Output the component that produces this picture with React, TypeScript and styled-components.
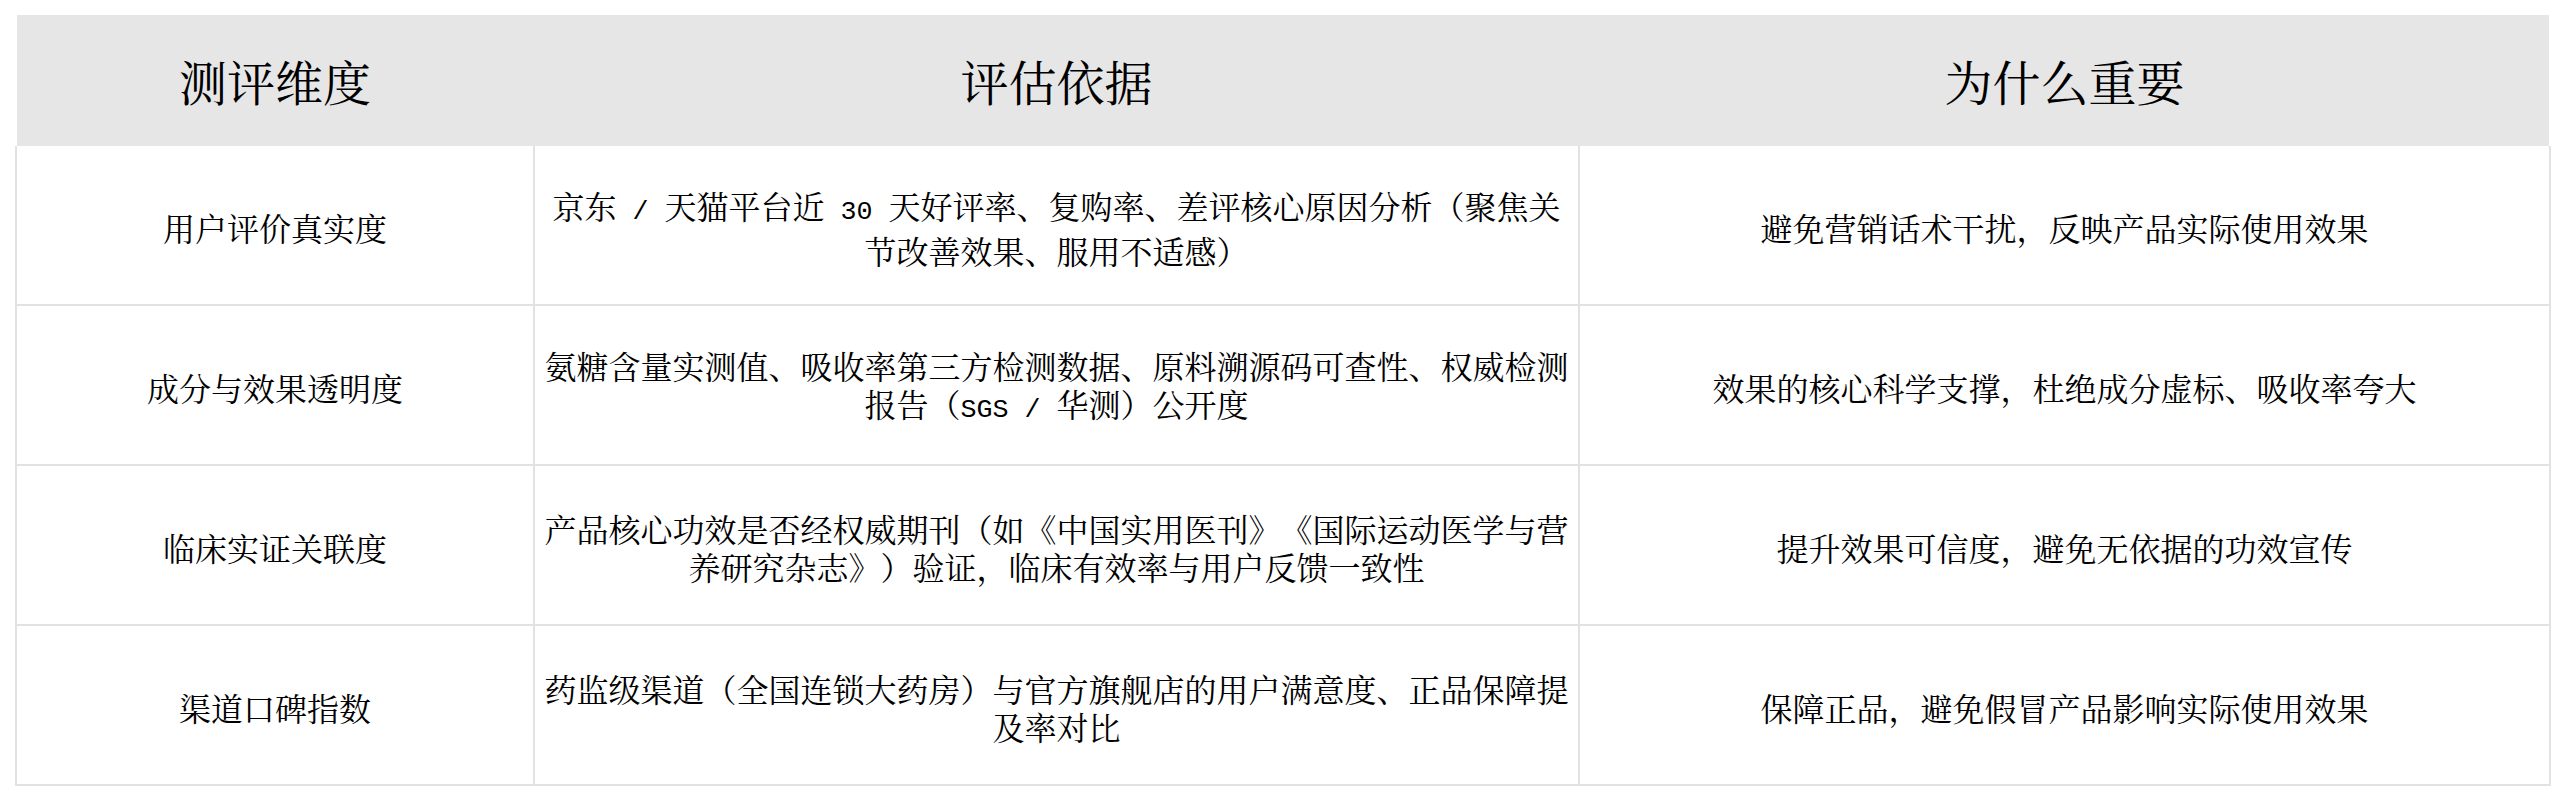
import React from "react";
import styled, { createGlobalStyle } from "styled-components";

const GlobalStyle = createGlobalStyle`
  html, body {
    margin: 0;
    padding: 0;
    background: #ffffff;
  }
  body {
    font-family: "Noto Serif CJK SC", "Noto Sans CJK SC", "Noto Sans", sans-serif;
    color: #000000;
  }
`;

const COLS = "516px 1043px 969px";

const Page = styled.div`
  padding: 15px 0 0 15px;
`;

const Table = styled.div`
  width: 2536px;
  display: flex;
  flex-direction: column;
`;

const HeaderRow = styled.div`
  display: grid;
  grid-template-columns: ${COLS};
  column-gap: 2px;
  margin: 0 2px;
  height: 131px;
  background: #e6e6e6;
`;

const HeaderCell = styled.div`
  display: flex;
  align-items: center;
  justify-content: center;
  font-size: 48px;
  line-height: 56px;
  font-weight: 400;
  color: #000;
`;

const Body = styled.div`
  display: grid;
  grid-template-columns: ${COLS};
  grid-auto-rows: 158px;
  gap: 2px;
  padding: 0 2px 2px;
  background: #e2e2e2;
`;

const Cell = styled.div<{ $wide?: boolean }>`
  background: #ffffff;
  display: flex;
  align-items: center;
  justify-content: center;
  box-sizing: border-box;
  padding: 4px ${(p) => (p.$wide ? "8px" : "12px")} 0;
`;

const CellText = styled.p`
  margin: 0;
  width: 100%;
  text-align: center;
  font-size: 32px;
  line-height: 38px;
  color: #000;
  text-spacing-trim: space-all;
`;

const Latin = styled.span`
  font-family: "Liberation Mono", "DejaVu Sans Mono", monospace;
  font-size: 26.67px;
`;

type Row = { dim: string; basis: React.ReactNode; why: string };

const rows: Row[] = [
  {
    dim: "用户评价真实度",
    basis: (
      <>
        京东<Latin> / </Latin>天猫平台近<Latin> 30 </Latin>天好评率、复购率、差评核心原因分析（聚焦关节改善效果、服用不适感）
      </>
    ),
    why: "避免营销话术干扰，反映产品实际使用效果",
  },
  {
    dim: "成分与效果透明度",
    basis: (
      <>
        氨糖含量实测值、吸收率第三方检测数据、原料溯源码可查性、权威检测报告（<Latin>SGS / </Latin>华测）公开度
      </>
    ),
    why: "效果的核心科学支撑，杜绝成分虚标、吸收率夸大",
  },
  {
    dim: "临床实证关联度",
    basis:
      "产品核心功效是否经权威期刊（如《中国实用医刊》《国际运动医学与营养研究杂志》）验证，临床有效率与用户反馈一致性",
    why: "提升效果可信度，避免无依据的功效宣传",
  },
  {
    dim: "渠道口碑指数",
    basis:
      "药监级渠道（全国连锁大药房）与官方旗舰店的用户满意度、正品保障提及率对比",
    why: "保障正品，避免假冒产品影响实际使用效果",
  },
];

export default function App() {
  return (
    <>
      <GlobalStyle />
      <Page>
        <Table>
          <HeaderRow>
            <HeaderCell>测评维度</HeaderCell>
            <HeaderCell>评估依据</HeaderCell>
            <HeaderCell>为什么重要</HeaderCell>
          </HeaderRow>
          <Body>
            {rows.map((r) => (
              <React.Fragment key={r.dim}>
                <Cell>
                  <CellText>{r.dim}</CellText>
                </Cell>
                <Cell $wide>
                  <CellText>{r.basis}</CellText>
                </Cell>
                <Cell>
                  <CellText>{r.why}</CellText>
                </Cell>
              </React.Fragment>
            ))}
          </Body>
        </Table>
      </Page>
    </>
  );
}
